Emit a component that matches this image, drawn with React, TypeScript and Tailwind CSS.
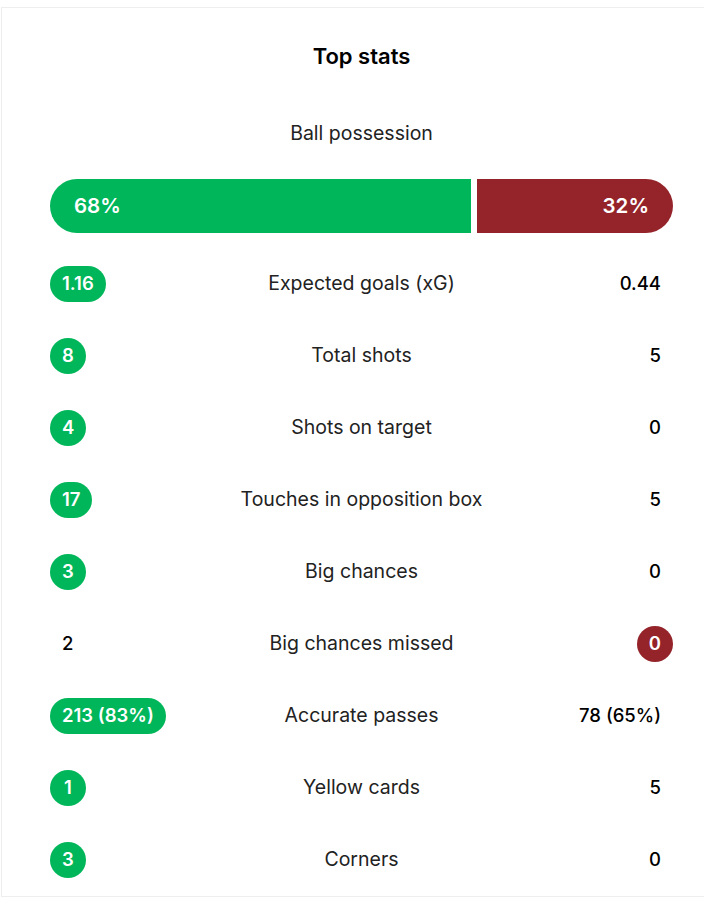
import React from "react";

type Side = { value: string; highlight?: boolean };

interface StatRow {
  label: string;
  home: Side;
  away: Side;
}

const stats: StatRow[] = [
  { label: "Expected goals (xG)", home: { value: "1.16", highlight: true }, away: { value: "0.44" } },
  { label: "Total shots", home: { value: "8", highlight: true }, away: { value: "5" } },
  { label: "Shots on target", home: { value: "4", highlight: true }, away: { value: "0" } },
  { label: "Touches in opposition box", home: { value: "17", highlight: true }, away: { value: "5" } },
  { label: "Big chances", home: { value: "3", highlight: true }, away: { value: "0" } },
  { label: "Big chances missed", home: { value: "2" }, away: { value: "0", highlight: true } },
  { label: "Accurate passes", home: { value: "213 (83%)", highlight: true }, away: { value: "78 (65%)" } },
  { label: "Yellow cards", home: { value: "1", highlight: true }, away: { value: "5" } },
  { label: "Corners", home: { value: "3", highlight: true }, away: { value: "0" } },
];

// 値の表示（ハイライト時はピル）
function Value({ side, color }: { side: Side; color: "green" | "red" }) {
  if (side.highlight) {
    return (
      <span
        className={
          "flex h-9 min-w-9 items-center justify-center rounded-full px-3 text-[18.5px] font-semibold text-white " +
          (color === "green" ? "bg-[#00b65a]" : "bg-[#94232a]")
        }
      >
        {side.value}
      </span>
    );
  }
  return <span className="flex h-9 items-center px-3 text-[18.5px] font-medium text-black">{side.value}</span>;
}

export default function App() {
  const home = 68;
  const away = 32;

  return (
    <div className="w-full overflow-hidden bg-white font-['Inter','Noto_Sans',sans-serif]">
      <div className="mt-[7px] ml-px w-[720px] border-t border-l border-b border-[#eeeeee] px-12">
        <h2 className="pt-[34px] text-center text-[22px] leading-7 font-semibold text-black">Top stats</h2>

        <div className="mt-[51px] text-center text-[19.5px] leading-6 text-[#222222]">Ball possession</div>

        {/* ボール支配率バー */}
        <div className="mt-[34px] flex h-[54px] justify-between">
          <div
            className="flex items-center rounded-l-full bg-[#00b65a] pl-6 text-[20.5px] font-semibold text-white"
            style={{ width: `calc(${home}% - 3px)` }}
          >
            {home}%
          </div>
          <div
            className="flex items-center justify-end rounded-r-full bg-[#94232a] pr-6 text-[20.5px] font-semibold text-white"
            style={{ width: `calc(${away}% - 3px)` }}
          >
            {away}%
          </div>
        </div>

        <div className="mt-[15px]">
          {stats.map((s) => (
            <div key={s.label} className="grid h-[72px] grid-cols-[1fr_auto_1fr] items-center">
              <div className="flex justify-start">
                <Value side={s.home} color="green" />
              </div>
              <div className="text-center text-[19.5px] text-[#222222]">{s.label}</div>
              <div className="flex justify-end">
                <Value side={s.away} color="red" />
              </div>
            </div>
          ))}
        </div>
      </div>
    </div>
  );
}
